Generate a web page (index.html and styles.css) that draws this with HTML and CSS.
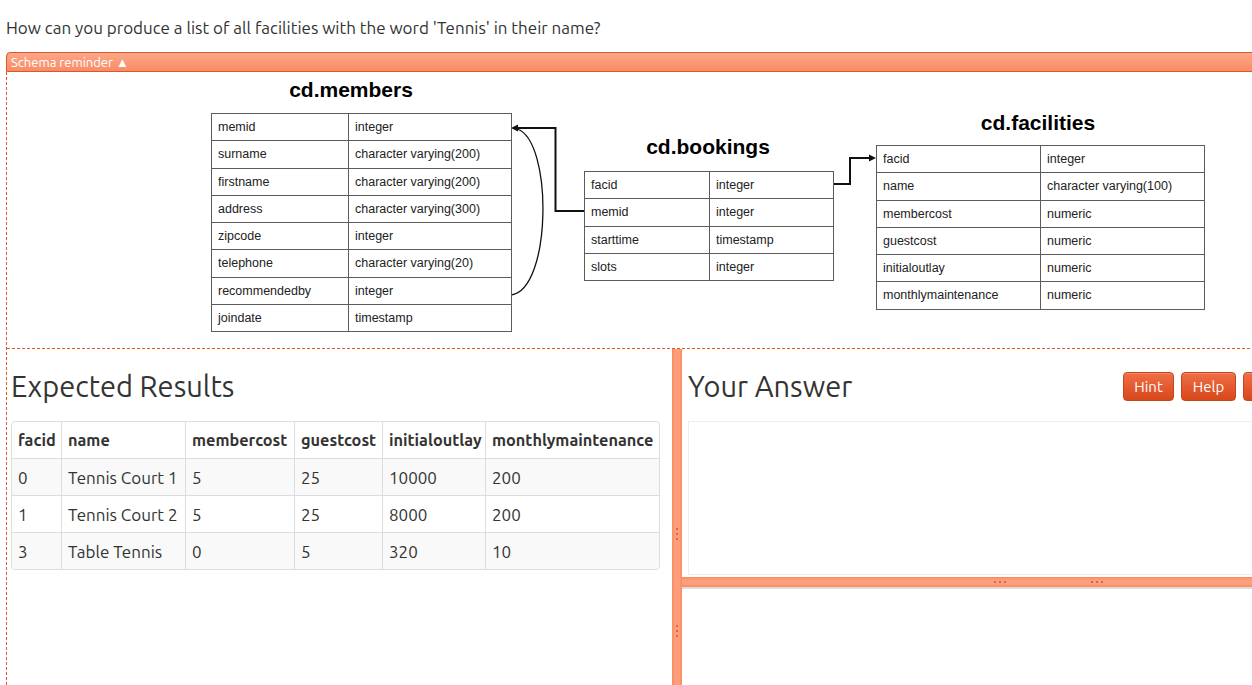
FILE: index.html
```html
<!DOCTYPE html>
<html>
<head>
<meta charset="utf-8">
<link rel="stylesheet" href="styles.css">
</head>
<body>
<div class="page">
  <p class="question">How can you produce a list of all facilities with the word 'Tennis' in their name?</p>
  <div class="schema-toggle">Schema reminder ▲</div>
  <div class="workspace">
    <div class="schema">
      <div class="diagram">
        <svg class="links" width="1252" height="348" viewBox="0 0 1252 348">
          <path d="M584,211 H555.5 V128 H516" fill="none" stroke="#111" stroke-width="2"/>
          <path d="M511,295 C552,290 553,140 517,129" fill="none" stroke="#111" stroke-width="1.3"/>
          <path d="M511,128 L518,124.5 L518,131.5 Z" fill="#111"/>
          <path d="M833,184 H850 V158 H870" fill="none" stroke="#111" stroke-width="2"/>
          <path d="M876,158 L869,154.5 L869,161.5 Z" fill="#111"/>
        </svg>
        <div class="dtitle t-members">cd.members</div>
        <table class="dtable tb-members">
          <tr><td>memid</td><td>integer</td></tr>
          <tr><td>surname</td><td>character varying(200)</td></tr>
          <tr><td>firstname</td><td>character varying(200)</td></tr>
          <tr><td>address</td><td>character varying(300)</td></tr>
          <tr><td>zipcode</td><td>integer</td></tr>
          <tr><td>telephone</td><td>character varying(20)</td></tr>
          <tr><td>recommendedby</td><td>integer</td></tr>
          <tr><td>joindate</td><td>timestamp</td></tr>
        </table>
        <div class="dtitle t-bookings">cd.bookings</div>
        <table class="dtable tb-bookings">
          <tr><td>facid</td><td>integer</td></tr>
          <tr><td>memid</td><td>integer</td></tr>
          <tr><td>starttime</td><td>timestamp</td></tr>
          <tr><td>slots</td><td>integer</td></tr>
        </table>
        <div class="dtitle t-facilities">cd.facilities</div>
        <table class="dtable tb-facilities">
          <tr><td>facid</td><td>integer</td></tr>
          <tr><td>name</td><td>character varying(100)</td></tr>
          <tr><td>membercost</td><td>numeric</td></tr>
          <tr><td>guestcost</td><td>numeric</td></tr>
          <tr><td>initialoutlay</td><td>numeric</td></tr>
          <tr><td>monthlymaintenance</td><td>numeric</td></tr>
        </table>
      </div>
    </div>
    <div class="panes">
      <section class="pane pane-left">
        <div class="pane-head">
          <h2>Expected Results</h2>
        </div>
        <table class="results">
          <colgroup>
            <col class="c1"><col class="c2"><col class="c3"><col class="c4"><col class="c5"><col class="c6">
          </colgroup>
          <thead>
            <tr><th>facid</th><th>name</th><th>membercost</th><th>guestcost</th><th>initialoutlay</th><th>monthlymaintenance</th></tr>
          </thead>
          <tbody>
            <tr><td>0</td><td>Tennis Court 1</td><td>5</td><td>25</td><td>10000</td><td>200</td></tr>
            <tr><td>1</td><td>Tennis Court 2</td><td>5</td><td>25</td><td>8000</td><td>200</td></tr>
            <tr><td>3</td><td>Table Tennis</td><td>0</td><td>5</td><td>320</td><td>10</td></tr>
          </tbody>
        </table>
      </section>
      <div class="vsplit">
        <span class="grip-v g1"></span>
        <span class="grip-v g2"></span>
      </div>
      <section class="pane pane-right">
        <div class="answer-top">
          <div class="pane-head">
            <h2>Your Answer</h2>
            <div class="buttons">
              <button class="btn b-hint">Hint</button>
              <button class="btn b-help">Help</button>
              <button class="btn b-run">Run</button>
            </div>
          </div>
          <div class="editor"></div>
        </div>
        <div class="hsplit">
          <span class="grip-h h1"></span>
          <span class="grip-h h2"></span>
        </div>
        <div class="output"></div>
      </section>
    </div>
  </div>
</div>
</body>
</html>
```

FILE: styles.css
```css
html, body {
  margin: 0;
  padding: 0;
  overflow: hidden;
  background: #fff;
}
body {
  font-family: Ubuntu, Lato, "Open Sans", sans-serif;
  color: #333;
}
.page {
  width: 1299px;
  padding-left: 6px;
}
.question {
  margin: 0;
  padding-top: 18px;
  box-sizing: border-box;
  font-size: 17px;
  line-height: 20px;
  height: 52px;
}
.schema-toggle {
  height: 18px;
  border: 1px solid #d65a2e;
  border-radius: 4px 0 0 0;
  background: linear-gradient(#fca688, #f98c66);
  color: #fff;
  font-size: 13px;
  line-height: 18px;
  padding-left: 4px;
}
.workspace {
  border-left: 1px dashed #e05a26;
}
.schema {
  height: 276px;
  border-bottom: 1px dashed #e05a26;
}
.diagram {
  position: relative;
  height: 276px;
  font-family: "Liberation Sans", Arial, sans-serif;
  color: #111;
}
.links {
  position: absolute;
  left: -7px;
  top: -72px;
}
.dtitle {
  position: absolute;
  width: 200px;
  text-align: center;
  font-weight: bold;
  font-size: 21px;
  line-height: 22px;
  color: #000;
}
.t-members { left: 244px; top: 7px; }
.t-bookings { left: 601px; top: 64px; }
.t-facilities { left: 931px; top: 40px; }
.dtable {
  position: absolute;
  border-collapse: collapse;
  font-size: 12.5px;
  color: #222;
}
.dtable td {
  border: 1px solid #5c5c5c;
  height: 27.25px;
  padding: 0 6px;
  box-sizing: border-box;
  white-space: nowrap;
}
.tb-members { left: 204px; top: 41px; width: 301px; }
.tb-members td:first-child { width: 137px; }
.tb-bookings { left: 577px; top: 99px; width: 250px; }
.tb-bookings td:first-child { width: 125px; }
.tb-facilities { left: 869px; top: 73px; width: 329px; }
.tb-facilities td:first-child { width: 164px; }

.panes {
  display: flex;
  height: 336px;
}
.pane {
  box-sizing: border-box;
}
.pane-left {
  width: 665px;
  padding: 23px 13px 0 4px;
}
.pane-head {
  display: flex;
  align-items: center;
  height: 29px;
}
.pane-head h2 {
  margin: 0;
  font-size: 29px;
  font-weight: normal;
  line-height: 29px;
  color: #333;
  flex: 1;
}
.results {
  margin-top: 20px;
  width: 649px;
  table-layout: fixed;
  border-collapse: separate;
  border-spacing: 0;
  border: 1px solid #ddd;
  border-radius: 4px;
  font-size: 17px;
}
.results .c1 { width: 49px; }
.results .c2 { width: 124px; }
.results .c3 { width: 109px; }
.results .c4 { width: 88px; }
.results .c5 { width: 103px; }
.results .c6 { width: 174px; }
.results th, .results td {
  height: 37px;
  box-sizing: border-box;
  padding: 0 6px;
  text-align: left;
  border-left: 1px solid #ddd;
  border-top: 1px solid #ddd;
  white-space: nowrap;
}
.results th {
  font-weight: bold;
  font-size: 16.3px;
  border-top: none;
  height: 36px;
}
.results th:first-child, .results td:first-child {
  border-left: none;
}
.results tbody tr:nth-child(odd) td {
  background: #f9f9f9;
}
.results tbody tr:last-child td:first-child { border-bottom-left-radius: 4px; }
.results tbody tr:last-child td:last-child { border-bottom-right-radius: 4px; }

.vsplit {
  position: relative;
  width: 10px;
  background: linear-gradient(to right, #f68a63, #ff9e7b 30%, #ff9e7b 70%, #f68a63);
}
.grip-v {
  position: absolute;
  left: 4px;
  width: 2px;
  height: 12px;
  background: repeating-linear-gradient(to bottom, #cf6a45 0 2px, transparent 2px 5px);
}
.g1 { top: 179px; }
.g2 { top: 276px; }

.pane-right {
  width: 617px;
  display: flex;
  flex-direction: column;
}
.answer-top {
  padding: 23px 6px 0 6px;
}
.buttons {
  display: flex;
  gap: 7px;
}
.btn {
  height: 29px;
  border: 1px solid #c5441b;
  border-radius: 4px;
  background: linear-gradient(#f06e46, #d8471b);
  color: #fff;
  font-family: Ubuntu, Lato, "Open Sans", sans-serif;
  font-size: 15px;
  padding: 0;
  box-shadow: inset 0 1px 0 rgba(255,255,255,0.2);
}
.b-hint { width: 51px; }
.b-help { width: 55px; }
.b-run { width: 50px; }
.editor {
  margin-top: 20px;
  height: 154px;
  border: 1px solid #eee;
  box-sizing: border-box;
}
.hsplit {
  position: relative;
  margin-top: 2px;
  height: 10px;
  background: linear-gradient(#f68a63, #ff9e7b 30%, #ff9e7b 70%, #f68a63);
  border-bottom: 2px solid #ddd;
}
.grip-h {
  position: absolute;
  top: 4px;
  width: 12px;
  height: 2px;
  background: repeating-linear-gradient(to right, #cf6a45 0 2px, transparent 2px 5px);
}
.h1 { left: 312px; }
.h2 { left: 409px; }
.output {
  flex: 1;
  background: #fff;
}
```
